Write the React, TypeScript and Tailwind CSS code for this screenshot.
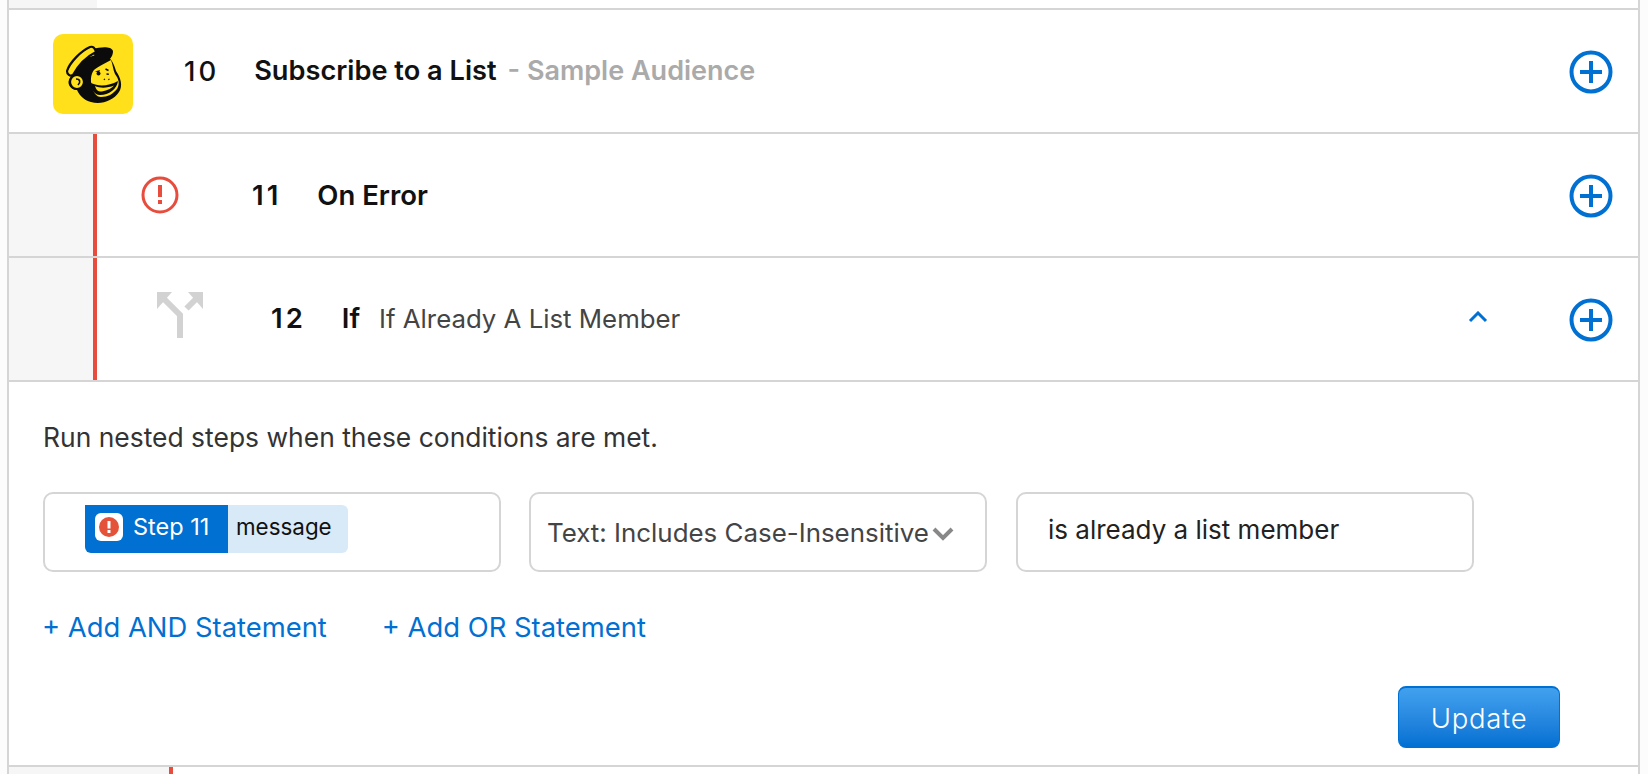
const PlusIcon = () => (
  <svg width="44" height="44" viewBox="0 0 44 44" fill="none" stroke="#0070d2" strokeWidth="4">
    <circle cx="22" cy="22" r="19.5" />
    <path d="M22 11v22M11 22h22" />
  </svg>
);

const MailchimpLogo = () => (
  <div className="mt-[6px] flex h-[80px] w-[80px] shrink-0 items-center justify-center rounded-[10px] bg-[#ffe01b]">
    <svg width="80" height="80" viewBox="0 0 80 80">
      {/* head */}
      <path d="M20 40C22 28 36 20 50 21C58 22 61 30 63 37C68 44 70 52 66 58C60 67 48 71 38 68C31 66 27 62 24 56C18 56 14 50 16 46C17 43 19 41 20 40Z" fill="#0b0b0b" />
      {/* face */}
      <path d="M41 36C45 33 52 29 58 26C60 31 60 36 62 40C66 45 67 50 64 55C60 60 55 63 48 63C43 63 40 58 39 52C37 46 38 40 41 36Z" fill="#ffe01b" />
      {/* cap */}
      <path d="M40 15C48 13 58 12 60 17C60 21 58 25 54 27C50 26 46 25 42 25Z" fill="#0b0b0b" />
      <path d="M14 37C17 28 28 17 37 13C40 12 42 14 43 18C35 22 26 30 20 41C17 43 14 40 14 37Z" fill="#ffe01b" stroke="#0b0b0b" strokeWidth="2.200" />
      {/* ear */}
      <circle cx="24" cy="48" r="7" fill="#ffe01b" stroke="#0b0b0b" strokeWidth="2.200" />
      <path d="M23 45C27 45 28 48 25 51" fill="none" stroke="#0b0b0b" strokeWidth="1.600" />
      {/* eyes, nose */}
      <path d="M42 37.500L47 36L46 38.500Z" fill="#0b0b0b" />
      <circle cx="45.500" cy="39.500" r="2" fill="#0b0b0b" />
      <path d="M52.500 35l3 1.500M53.500 40l2.300 .2M51 45l.8 .8M55.500 45l.8 .8" stroke="#0b0b0b" strokeWidth="1.500" fill="none" />
      {/* mouth */}
      <path d="M38 49C46 53 56 52 65 47C64 55 56 61 47 61C41 61 38 55 38 49Z" fill="#0b0b0b" />
      <path d="M42 52C47 54.500 55 54 61 51.500C58 55 52 57.500 47 57.500C44.500 57.500 43 55 42 52Z" fill="#ffe01b" />
    </svg>
  </div>
);

const ErrorIcon = () => (
  <svg width="38" height="38" viewBox="0 0 38 38" fill="none">
    <circle cx="19" cy="19" r="17" stroke="#e74c3c" strokeWidth="3" />
    <path d="M19 9v12" stroke="#e74c3c" strokeWidth="4" />
    <rect x="17" y="24" width="4" height="4" fill="#e74c3c" />
  </svg>
);

const BranchIcon = () => (
  <svg width="46" height="46" viewBox="0 0 46 46" fill="#d2d2d2">
    <path d="M0 0h15L0 17Z" />
    <path d="M46 0H31l15 17Z" />
    <path d="M6 6L23 23V46M40 6L29.500 16.500" fill="none" stroke="#d2d2d2" strokeWidth="6" />
  </svg>
);

const StepRow = ({ children, trailing }: { children: React.ReactNode; trailing?: React.ReactNode }) => (
  <div className="flex h-[124px] items-center border-b-2 border-[#d5d5d5]">
    <div className="flex h-full flex-1 items-center">{children}</div>
    {trailing}
    <div className="mr-[25px] ml-[81px] pt-[2px]">
      <PlusIcon />
    </div>
  </div>
);

const Indent = () => (
  <div className="h-full w-[88px] shrink-0 border-r-4 border-[#e74c3c] bg-[#f6f6f6]" />
);

export default function App() {
  return (
    <div className="h-[774px] w-[1648px] overflow-hidden bg-[#fcfcfc] font-['Inter',sans-serif]">
      <div className="ml-[7px] h-[774px] w-[1633px] border-x-2 border-[#d5d5d5] bg-white">
        <div className="h-[10px] border-b-2 border-[#d5d5d5]">
          <div className="h-[8px] w-[88px] bg-[#f6f6f6]" />
        </div>

        <div className="flex h-[124px] items-center border-b-2 border-[#d5d5d5]">
          <div className="flex flex-1 items-center pl-[44px]">
            <MailchimpLogo />
            <span className="mt-[1px] ml-[51px] text-[27.500px] font-medium tracking-[3px] text-[#111]">10</span>
            <span className="mt-[1px] ml-[35px] text-[27.200px] font-semibold text-[#111]">Subscribe to a List</span>
            <span className="mt-[1px] ml-[11px] text-[27px] font-semibold text-[#aaa]">- Sample Audience</span>
          </div>
          <div className="mr-[25px] pt-[2px]">
            <PlusIcon />
          </div>
        </div>

        <StepRow>
          <Indent />
          <div className="ml-[44px]">
            <ErrorIcon />
          </div>
          <span className="mt-[2px] ml-[73px] text-[27.500px] font-semibold tracking-[3px] text-[#111]">11</span>
          <span className="mt-[2px] ml-[36px] text-[27.500px] font-semibold text-[#111]">On Error</span>
        </StepRow>

        <StepRow
          trailing={
            <svg className="mb-[4px]" width="20" height="12" viewBox="0 0 20 12" fill="none" stroke="#0070d2" strokeWidth="3">
              <path d="M2 10l8-8 8 8" />
            </svg>
          }
        >
          <Indent />
          <div className="mb-[8px] ml-[60px]">
            <BranchIcon />
          </div>
          <span className="ml-[68px] text-[27.500px] font-semibold tracking-[3px] text-[#111]">12</span>
          <span className="ml-[36px] text-[27.500px] font-semibold text-[#111]">If</span>
          <span className="ml-[19px] text-[25.800px] text-[#444]">If Already A List Member</span>
        </StepRow>

        <div className="h-[385px] border-b-2 border-[#d5d5d5] px-[34px] pt-[40px]">
          <p className="text-[26.450px] leading-[30px] text-[#333]">Run nested steps when these conditions are met.</p>

          <div className="mt-[40px] flex gap-[28px]">
            <div className="flex h-[80px] w-[458px] items-center rounded-[10px] border-2 border-[#d5d5d5] pl-[40px]">
              <div className="mb-[6px] flex h-[48px] items-stretch">
                <div className="flex w-[143px] items-center rounded-bl-[6px] bg-[#0070d2] pb-[4px] pl-[10px]">
                  <span className="flex h-[28px] w-[28px] items-center justify-center rounded-[6px] bg-white">
                    <svg width="20" height="20" viewBox="0 0 20 20">
                      <circle cx="10" cy="10" r="10" fill="#e5523a" />
                      <path d="M10 4v7.500" stroke="#fff" strokeWidth="3" />
                      <rect x="8.500" y="13" width="3" height="3" fill="#fff" />
                    </svg>
                  </span>
                  <span className="ml-[10px] text-[23.500px] text-white">Step 11</span>
                </div>
                <div className="flex w-[120px] items-center rounded-r-[6px] bg-[#d8e9f8] pb-[4px] pl-[8px] text-[22.400px] text-[#111]">
                  message
                </div>
              </div>
            </div>

            <div className="flex h-[80px] w-[458px] items-center rounded-[10px] border-2 border-[#d5d5d5] pl-[16px]">
              <span className="pt-[2px] text-[25.900px] whitespace-nowrap text-[#444]">Text: Includes Case-Insensitive</span>
              <svg className="mt-[4px] ml-[3px]" width="22" height="14" viewBox="0 0 22 14" fill="none" stroke="#888" strokeWidth="4">
                <path d="M2 2l9 9 9-9" />
              </svg>
            </div>

            <div className="ml-[1px] flex h-[80px] w-[458px] items-center rounded-[10px] border-2 border-[#d5d5d5] pb-[6px] pl-[30px] text-[26px] text-[#222]">
              is already a list member
            </div>
          </div>

          <div className="mt-[37px] -ml-[1px] flex gap-[55px] text-[27.400px] leading-[36px] text-[#0070d2]">
            <span>+ Add AND Statement</span>
            <span>+ Add OR Statement</span>
          </div>

          <div className="mt-[41px] flex justify-end pr-[44px]">
            <button className="h-[62px] w-[162px] rounded-[8px] border border-t-2 border-[#0070d2] bg-gradient-to-b from-[#42a1ee] to-[#0070d2] pt-[2px] text-[27.500px] font-light tracking-[0.7px] text-white">
              Update
            </button>
          </div>
        </div>

        <div className="h-[7px] w-[164px] border-r-4 border-[#e74c3c] bg-[#f6f6f6]" />
      </div>
    </div>
  );
}
